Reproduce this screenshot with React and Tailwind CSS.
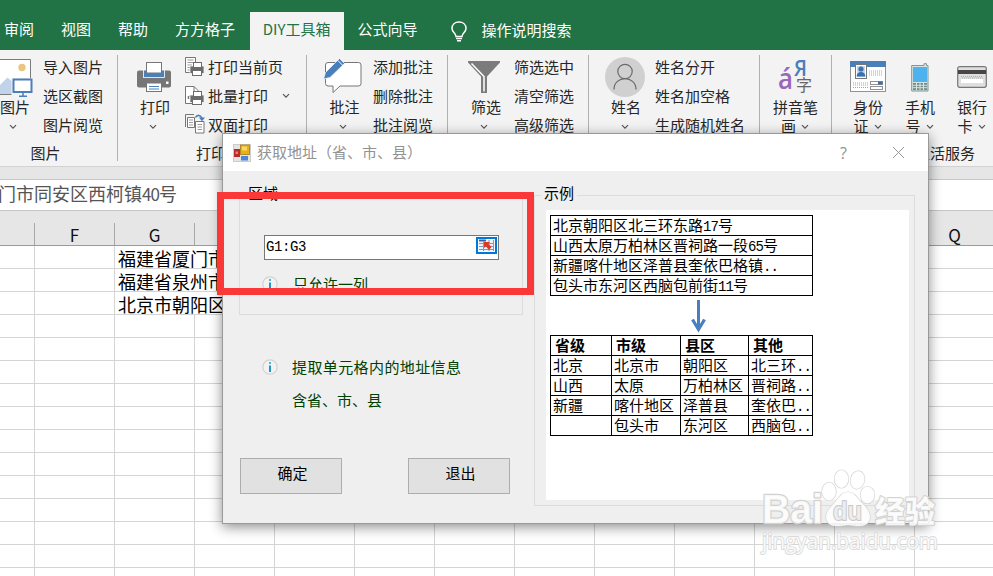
import { X } from "lucide-react";

const tabs = ["审阅", "视图", "帮助", "方方格子"];

const Chevron = ({ className = "" }) => (
  <svg className={className} width="8" height="6" viewBox="0 0 8 6" fill="none">
    <path d="M1 1.2 L4 4.2 L7 1.2" stroke="#555" strokeWidth="1.2" />
  </svg>
);

const PictureIcon = () => (
  <svg className="shrink-0" width="42" height="38" viewBox="0 0 42 38" fill="none">
    <path d="M0 .5H39.5V35.5H0" fill="#fff" stroke="#7b7b7b" />
    <circle cx="31" cy="8.500" r="3.700" fill="#ecc681" />
    <path d="M8 35 V27 L16.500 18.500 L24 25 V35Z" fill="#c0d3ea" />
    <path d="M20.500 19H42V38H20.500Z" fill="#f3f3f3" />
    <path d="M20.500 19H39V18H20.500Z" fill="#fff" />
    <rect x="22.500" y="20.500" width="18" height="12.500" fill="#fff" stroke="#4a7fb9" strokeWidth="2" />
    <path d="M28 37.300H36M32 34V37" stroke="#4a7fb9" strokeWidth="1.500" />
  </svg>
);

const PrinterIcon = () => (
  <svg width="34" height="30" viewBox="0 0 34 30">
    <rect x="0" y="8.500" width="34" height="17" rx="2" fill="#767676" />
    <rect x="6.500" y="8" width="21" height="7.500" fill="#4a7fb9" stroke="#fff" strokeWidth=".8" />
    <rect x="9.500" y=".5" width="15" height="10.500" fill="#fff" stroke="#767676" />
    <rect x="29" y="19.500" width="2.500" height="2.500" fill="#fff" />
    <rect x="9.500" y="21" width="15" height="8.500" fill="#fff" stroke="#767676" />
    <path d="M12 24.500H22M12 27H22" stroke="#4a7fb9" />
  </svg>
);

const SmallPrinter = () => (
  <g>
    <rect x="5" y="9" width="14" height="7.500" fill="#6b6b6b" stroke="#f3f3f3" strokeWidth=".8" />
    <rect x="8.500" y="5.500" width="8" height="5" fill="#fff" stroke="#6b6b6b" />
    <rect x="7.500" y="13.500" width="9" height="5" fill="#fff" stroke="#6b6b6b" />
  </g>
);

const PrintPageIcon = () => (
  <svg width="20" height="20" viewBox="0 0 20 20">
    <path d="M.5 .5H10.500V15.500H.5Z" fill="#fff" stroke="#767676" />
    <path d="M2.500 3H8.500M2.500 5.500H8.500M2.500 8H7M2.500 10.500H5M2.500 13H5" stroke="#999" />
    <SmallPrinter />
  </svg>
);

const PrintBatchIcon = () => (
  <svg width="20" height="20" viewBox="0 0 20 20">
    <path d="M.5 .5H9L14 5.500V17.500H.5Z" fill="#fff" stroke="#767676" />
    <path d="M9 .5V5.500H14" fill="none" stroke="#767676" />
    <path d="M3.500 10V13M5.500 9V11" stroke="#767676" strokeWidth="1.500" />
    <SmallPrinter />
  </svg>
);

const PrintDuplexIcon = () => (
  <svg className="-mt-0.5" width="20" height="20" viewBox="0 0 20 20" fill="none">
    <path d="M.5 13V.5H9" stroke="#767676" />
    <path d="M2.500 3.500H9.500V13.500H2.500Z" fill="#fff" stroke="#767676" />
    <path d="M4 6H8M4 8.500H8M4 11H8" stroke="#999" />
    <path d="M10.500 7.500H19V19H10.500Z" fill="#fff" stroke="#767676" />
    <path d="M12.500 10.500H17M12.500 13H17M12.500 15.500H17" stroke="#999" />
    <path d="M10.500 3.500C12 .5 16 .5 17 5" stroke="#4a7fb9" strokeWidth="1.600" />
    <path d="M13.800 3.500H20L17 7.300Z" fill="#4a7fb9" />
  </svg>
);

const CommentIcon = () => (
  <svg width="39" height="38" viewBox="0 0 39 38">
    <path
      d="M5 5.500H35.500Q38 5.500 38 8V26.500Q38 29 35.500 29H17L10 35.500V29H5Q2.500 29 2.500 26.500V8Q2.500 5.500 5 5.500Z"
      fill="#fff"
      stroke="#767676"
    />
    <path d="M.5 22 L2.500 15.500 L16.500 1.500 L21.500 6.500 L7 20.500Z" fill="#4a7fb9" stroke="#f3f3f3" strokeWidth=".8" />
    <path d="M14.700 3.300 L19.700 8.300" stroke="#fff" />
  </svg>
);

const FilterIcon = () => (
  <svg width="32" height="33" viewBox="0 0 32 33">
    <path d="M0 0H32V1.500L19 15.500V32H13V15.500L0 1.500Z" fill="#7b7b7b" />
    <path d="M3.500 2.500 L16 15.500 V30.500" fill="none" stroke="#fff" strokeWidth="1.500" />
  </svg>
);

const PersonIcon = () => (
  <svg width="40" height="40" viewBox="0 0 40 40" fill="none">
    <circle cx="20" cy="20" r="20" fill="#d0d0d0" />
    <circle cx="20" cy="14.500" r="7.200" stroke="#6a6a6a" strokeWidth="1.200" />
    <path d="M9 32.500C9 18 31 18 31 32.500" stroke="#6a6a6a" strokeWidth="1.200" />
  </svg>
);

const PinyinIcon = () => (
  <svg className="overflow-visible" width="36" height="38" viewBox="0 0 36 38">
    <text x="0" y="32" fontSize="28" fontWeight="600" textLength="15" lengthAdjust="spacingAndGlyphs" fill="#9966b8" fontFamily="Open Sans, sans-serif">á</text>
    <text x="16" y="19" fontSize="22" fontWeight="600" textLength="13" lengthAdjust="spacingAndGlyphs" fill="#4a7fb9" fontFamily="Open Sans, sans-serif">Я</text>
    <text x="18" y="34" fontSize="16" fill="#666" fontFamily="Noto Sans CJK SC, sans-serif">字</text>
  </svg>
);

const IdCardIcon = () => (
  <svg width="36" height="31" viewBox="0 0 36 31">
    <rect x=".5" y=".5" width="35" height="30" fill="#fff" stroke="#929292" />
    <rect width="36" height="6" fill="#4a7fb9" />
    <rect x="5.500" y="3.500" width="11" height="14" fill="#fff" stroke="#767676" />
    <rect x="7" y="5" width="8" height="11" fill="#c5d8ee" />
    <circle cx="11" cy="8" r="2.600" fill="#3a70ae" />
    <path d="M6.500 15.500Q7 11 11 11Q15 11 15.500 15.500Z" fill="#3a70ae" />
    <path d="M19 10H33M19 12H33M19 14H33M3 22H18M3 24H18M3 26.500H18" stroke="#a5a5a5" strokeDasharray="1 1" />
    <rect x="20.500" y="20.500" width="12" height="3" fill="#fff" stroke="#929292" />
    <rect x="28" y="20.500" width="4.500" height="3" fill="#3a70ae" />
    <rect x="20.500" y="25.500" width="12" height="3" fill="#fff" stroke="#929292" />
  </svg>
);

const PhoneIcon = () => (
  <svg width="18" height="29" viewBox="0 0 18 29">
    <path d="M.7 2.500H13V.7H15.500V2.500H17V28H.7Z" fill="#d9e4e2" stroke="#7f9693" />
    <rect x="2" y="4" width="14" height="15" fill="#4db2ee" />
    <rect x="2" y="20" width="14" height="7" fill="#718c89" />
    <path d="M5.500 20V27M9 20V27M12.500 20V27M2 22.300H16M2 24.700H16" stroke="#d9e4e2" />
  </svg>
);

const BankCardIcon = () => (
  <svg width="30" height="22" viewBox="0 0 30 22">
    <rect x=".7" y=".7" width="28.600" height="20.600" rx="2" fill="#e0dfdf" stroke="#777" strokeWidth="1.200" />
    <rect x="1" y="4" width="28" height="4" fill="#494448" />
    <path d="M4 10.500H26M5 12H26" stroke="#a9a9a9" strokeDasharray="1 1" />
    <rect x="4" y="13" width="22" height="4" fill="#fff" />
  </svg>
);

const InfoIcon = () => (
  <svg className="shrink-0" width="16" height="16" viewBox="0 0 16 16">
    <circle cx="8" cy="8" r="7.200" fill="#f2f2f2" stroke="#d2d2d2" strokeWidth="1.200" />
    <path d="M8 3V5" stroke="#4ab8dc" strokeWidth="2" />
    <path d="M8 6.500V13" stroke="#1e98cc" strokeWidth="2" />
  </svg>
);

const AppIcon = () => (
  <svg width="18" height="18" viewBox="0 0 18 18">
    <rect x=".5" y=".5" width="17" height="17" fill="#e4e4e4" stroke="#ccc" />
    <rect x="1" y="5" width="6" height="8" fill="#b92c28" />
    <rect x="2.500" y="7.500" width="2.500" height="2.500" fill="#e8807c" />
    <rect x="7.500" y="1" width="9" height="9.500" fill="#e9ae1c" stroke="#a97a10" strokeWidth=".8" />
    <rect x="9" y="2.500" width="5" height="4" fill="#fbd75c" />
    <rect x="8" y="12" width="7" height="4.500" fill="#4b86dc" />
  </svg>
);

const RangePicker = () => (
  <button className="flex h-[17px] w-[21px] items-center justify-center border-2 border-[#0078d7] bg-white">
    <svg width="17" height="13" viewBox="0 0 17 13">
      <rect x=".5" y=".5" width="16" height="12" fill="#eef3fb" />
      <path d="M1 1.500H8" stroke="#3f5f9f" strokeWidth="2" />
      <path d="M1 4.500H16M1 7.500H16M1 10.500H16M5.500 2V12M11 1V12M15.500 1V12" stroke="#7f97c6" strokeWidth="1" />
      <path d="M6 3H12L10.300 4.800L13.500 8L11 11L7.800 7.300L6 9Z" fill="#d93a22" />
    </svg>
  </button>
);

const BigButton = ({ icon, label, iconClass, className, chevronClass = "" }) => (
  <div className={`flex shrink-0 flex-col items-center ${className}`}>
    <div className={`flex h-[42px] justify-center ${iconClass}`}>{icon}</div>
    <span className="leading-5 whitespace-nowrap">{label}</span>
    <Chevron className={`mt-[7px] ${chevronClass}`} />
  </div>
);

// Label wraps to a second line that carries the drop-down arrow
const TwoLineButton = ({ icon, lines, className, iconClass }) => (
  <div className={`flex shrink-0 flex-col items-center ${className}`}>
    <div className={`flex h-[42px] justify-center ${iconClass}`}>{icon}</div>
    <span className="leading-5 whitespace-nowrap">{lines[0]}</span>
    <span className="flex items-center gap-[5px] pr-px leading-[18px]">
      {lines[1]}
      <Chevron className="mt-0.5" />
    </span>
  </div>
);

const Items = ({ items, className = "" }) => (
  <div className={`-mt-px flex shrink-0 flex-col gap-[3px] ${className}`}>
    {items.map((item) => (
      <span key={item} className="leading-[26px] whitespace-nowrap">
        {item}
      </span>
    ))}
  </div>
);

const Group = ({ className, label, children }) => (
  <section className={`flex h-[106px] shrink-0 flex-col border-[#b1b1b1] ${className}`}>
    <div className="flex h-[90px] shrink-0">{children}</div>
    {label && <div className="text-center leading-4">{label}</div>}
  </section>
);

const Ribbon = () => (
  <div className="flex h-[117px] overflow-hidden border-b border-[#d2d2d2] bg-[#f3f3f3] pt-[5px] text-[15px] text-[#262626]">
    <Group className="w-[118px] border-r pr-[26px]" label="图片">
      <BigButton className="w-[30px]" iconClass="pt-1 mr-[6px]" icon={<PictureIcon />} label="图片" chevronClass="mr-1" />
      <Items className="ml-[13px]" items={["导入图片", "选区截图", "图片阅览"]} />
    </Group>
    <Group className="w-[189px] border-r pr-0.5" label="打印">
      <BigButton className="ml-[19px] w-[36px]" iconClass="pt-[7px] mr-0.5" icon={<PrinterIcon />} label="打印" chevronClass="mr-1" />
      <div className="-mt-px ml-[12px] flex shrink-0 flex-col gap-[3px] leading-[26px]">
        <div className="flex items-center gap-[3px]">
          <PrintPageIcon />
          打印当前页
        </div>
        <div className="flex items-center gap-[3px]">
          <PrintBatchIcon />
          批量打印
          <Chevron className="ml-[11px]" />
        </div>
        <div className="flex items-center gap-[3px]">
          <PrintDuplexIcon />
          双面打印
        </div>
      </div>
    </Group>
    <Group className="w-[141px] border-r">
      <BigButton className="ml-[16px] w-[43px]" iconClass="pt-0.5 mr-1" icon={<CommentIcon />} label="批注" chevronClass="mr-1" />
      <Items className="ml-[7px]" items={["添加批注", "删除批注", "批注阅览"]} />
    </Group>
    <Group className="w-[141px] border-r">
      <BigButton className="ml-[20px] w-[36px]" iconClass="pt-[6px] mr-1" icon={<FilterIcon />} label="筛选" chevronClass="mr-1" />
      <Items className="ml-[10px]" items={["筛选选中", "清空筛选", "高级筛选"]} />
    </Group>
    <Group className="w-[171px] border-r">
      <BigButton className="ml-[16px] w-[42px]" iconClass="pt-0.5 mr-0.5" icon={<PersonIcon />} label="姓名" chevronClass="mr-0.5" />
      <Items className="ml-[8px]" items={["姓名分开", "姓名加空格", "生成随机姓名"]} />
    </Group>
    <Group className="w-[72px] border-r">
      <TwoLineButton className="w-[71px]" iconClass="pt-0.5" icon={<PinyinIcon />} lines={["拼音笔", "画"]} />
    </Group>
    <Group className="w-[226px]" label="生活服务">
      <TwoLineButton className="ml-[16px] w-[40px]" iconClass="pt-[6px]" icon={<IdCardIcon />} lines={["身份", "证"]} />
      <TwoLineButton className="ml-[12px] w-[40px]" iconClass="pt-[8px]" icon={<PhoneIcon />} lines={["手机", "号"]} />
      <TwoLineButton className="ml-[12px] w-[40px]" iconClass="pt-[11px]" icon={<BankCardIcon />} lines={["银行", "卡"]} />
    </Group>
  </div>
);

const columns = ["", "F", "G", "", "", "", "", "", "", "", "", "", "Q"];
const cells = ["福建省厦门市", "福建省泉州市", "北京市朝阳区"];

const Sheet = () => (
  <div>
    <div className="flex h-[35px] items-end border-b border-[#9b9b9b] bg-[#e6e6e6]">
      {columns.map((c, i) => (
        <div
          key={i}
          className={`h-[22px] shrink-0 border-r border-[#a9a9a9] text-center text-[17px] leading-[24px] text-[#111] ${
            i === 0 ? "w-[35px]" : "w-[80px]"
          }`}
        >
          {c}
        </div>
      ))}
    </div>
    {Array.from({ length: 15 }, (_, r) => (
      <div key={r} className="flex h-[23px] border-b border-[#d4d4d4]">
        {columns.map((_, i) => (
          <div
            key={i}
            className={`shrink-0 pl-[3px] text-[18px] leading-[24px] whitespace-nowrap text-black ${
              i === 0 ? "w-[35px]" : "w-[80px]"
            } ${i === 2 && cells[r] ? "" : "border-r border-[#d4d4d4]"}`}
          >
            {i === 2 && cells[r]}
          </div>
        ))}
      </div>
    ))}
  </div>
);

// Half-width digits, two to one Chinese character
const Num = ({ children }) => (
  <span className="font-['Liberation_Mono',monospace] text-[14px] tracking-[-0.9px]">{children}</span>
);

const addresses = [
  ["北京朝阳区北三环东路", "17", "号"],
  ["山西太原万柏林区晋祠路一段", "65", "号"],
  ["新疆喀什地区泽普县奎依巴格镇", "..", ""],
  ["包头市东河区西脑包前街", "11", "号"],
];

const results = [
  ["北京", "北京市", "朝阳区", "北三环"],
  ["山西", "太原", "万柏林区", "晋祠路"],
  ["新疆", "喀什地区", "泽普县", "奎依巴"],
  ["", "包头市", "东河区", "西脑包"],
];

const Example = () => (
  <div className="h-[290px] w-[363px] bg-white pt-[5px] pl-[4px] text-black">
    <div className="w-[263px] border border-b-0 border-black">
      {addresses.map(([before, num, after]) => (
        <div key={before} className="h-[20px] border-b border-black pl-[2px] leading-[18px] whitespace-nowrap">
          {before}
          <Num>{num}</Num>
          {after}
        </div>
      ))}
    </div>
    <svg className="mt-[3px] ml-[141px]" width="15" height="34" viewBox="0 0 15 34" fill="none">
      <path d="M7.500 1V30" stroke="#4a7fbd" strokeWidth="3" />
      <path d="M1.500 20.500L7.500 30.500L13.500 20.500" stroke="#4a7fbd" strokeWidth="3.200" />
    </svg>
    <div className="mt-[2px] grid w-[263px] grid-cols-[61px_69px_68px_64px] border-t border-l border-black">
      {["省级", "市级", "县区", "其他"].map((h) => (
        <div key={h} className="h-[20px] border-r border-b border-black pl-1 font-bold leading-[18px]">
          {h}
        </div>
      ))}
      {results.flatMap((row, r) =>
        row.map((text, c) => (
          <div key={`${r}-${c}`} className="h-[20px] border-r border-b border-black pl-[2px] leading-[18px] whitespace-nowrap">
            {text}
            {c === 3 && <Num>..</Num>}
          </div>
        ))
      )}
    </div>
  </div>
);

const Dialog = () => (
  <div className="absolute top-[133px] left-[222px] h-[391px] w-[707px] border border-[#999] bg-[#efefef] text-[15px] shadow-[0_3px_12px_rgba(0,0,0,0.45)]">
    <div className="flex h-[37px] items-center bg-white pl-[10px] text-[#929292]">
      <AppIcon />
      <span className="ml-[6px] pb-px">获取地址（省、市、县）</span>
      <span className="ml-auto font-['Open_Sans',sans-serif] text-[16px]">?</span>
      <X className="mr-[19px] ml-[41px]" size={21} strokeWidth={1} color="#888" />
    </div>

    <div className="flex">
      <div className="w-[311px] pl-[16px]">
        <fieldset className="mt-[13px] h-[131px] w-[284px] border border-[#dcdcdc] pl-[24px]">
          <legend className="-ml-[19px] px-[3px] pb-[5px] leading-[17px] text-black">区域</legend>
          <div className="mt-[29px] flex h-[25px] w-[235px] items-start justify-between border border-[#777] bg-white pt-px pr-[1px] pl-[1px]">
            <span className="font-['Liberation_Mono',monospace] text-[14px] leading-[20px] tracking-[-0.4px] text-black">G1:G3</span>
            <RangePicker />
          </div>
          <div className="mt-[13px] -ml-[2px] flex items-center gap-[15px] text-[#004000]">
            <InfoIcon />
            只允许一列
          </div>
        </fieldset>

        <div className="mt-[41px] ml-[23px] flex items-center gap-[14px] tracking-[0.4px] text-[#004000]">
          <InfoIcon />
          提取单元格内的地址信息
        </div>
        <div className="mt-[10px] ml-[53px] text-[#004000]">含省、市、县</div>

        <div className="mt-[47px] ml-px flex gap-[66px] text-black">
          <button className="h-[36px] w-[102px] border border-[#adadad] bg-[#e1e1e1] pb-[5px] pl-[3px]">确定</button>
          <button className="h-[36px] w-[102px] border border-[#adadad] bg-[#e1e1e1] pb-[5px] pl-[3px]">退出</button>
        </div>
      </div>

      <fieldset className="mt-[13px] h-[322px] w-[381px] border border-[#dcdcdc] pl-[11px]">
        <legend className="-ml-[5px] px-[3px] pb-[5px] leading-[17px] text-black">示例</legend>
        <div className="pt-[4px]">
          <Example />
        </div>
      </fieldset>
    </div>
  </div>
);

const Watermark = () => (
  <svg className="absolute top-[464px] left-[758px]" width="190" height="96" viewBox="0 0 190 96">
    <g fill="#fff" fillOpacity=".85" stroke="#d2d2d2" strokeWidth="1.200" paintOrder="stroke" strokeLinejoin="round">
      <text x="4" y="59" fontSize="41" fontWeight="700" textLength="61" lengthAdjust="spacingAndGlyphs" strokeWidth="2.500" fontFamily="Liberation Sans, sans-serif">
        Bai
      </text>
      <ellipse cx="71" cy="27.500" rx="7" ry="9" />
      <ellipse cx="83.500" cy="15" rx="7" ry="9" />
      <ellipse cx="99.500" cy="16" rx="7" ry="9" transform="rotate(12 99.500 16)" />
      <ellipse cx="109.500" cy="31" rx="7" ry="8.500" />
      <path d="M90 28C96 28 99 33 103 38C108 43 112 47 112 53C112 59 107 62 101 62C95 62 94 61 90 61C86 61 84 62 79 62C73 62 68 59 68 53C68 47 73 43 77 38C81 33 84 28 90 28Z" />
      <text x="75" y="56" fontSize="25" fontWeight="700" textLength="29" lengthAdjust="spacingAndGlyphs" fill="#eee" stroke="#c8c8c8" strokeWidth="1.800" fontFamily="Liberation Sans, sans-serif">
        du
      </text>
      <text x="117" y="58" fontSize="30" fontWeight="900" textLength="60" strokeWidth="2" fontFamily="Noto Sans CJK SC, sans-serif">
        经验
      </text>
      <text x="4" y="85" fontSize="22" textLength="176" lengthAdjust="spacingAndGlyphs" stroke="#dadada" strokeWidth="1.800" fontFamily="Open Sans, sans-serif">
        jingyan.baidu.com
      </text>
    </g>
  </svg>
);

const App = () => (
  <div lang="zh-CN" className="relative h-[576px] w-[993px] overflow-hidden bg-white font-['Noto_Sans_CJK_SC',sans-serif]">
    <header className="flex h-[50px] items-end bg-[#217346] pt-3 text-[15px] text-white">
      <nav className="flex h-[38px] items-center">
        <div className="flex gap-[27px] pr-[14.500px] pb-[3px] pl-1">
          {tabs.map((t) => (
            <span key={t}>{t}</span>
          ))}
        </div>
        <span className="flex h-full w-[94px] items-center justify-center bg-[#f3f3f3] pb-[3px] text-[#217346]">DIY工具箱</span>
        <span className="ml-[14px] pb-[3px]">公式向导</span>
        <svg className="ml-[33px]" width="16" height="21" viewBox="0 0 16 21" fill="none" stroke="#fff" strokeWidth="1.500">
          <path d="M5 15.500C5 12 1 11.500 1 7.500C1 3.500 4 1 8 1S15 3.500 15 7.500C15 11.500 11 12 11 15.500Z" />
          <path d="M5 17.500H11M6 19.800H10" />
        </svg>
        <span className="ml-[15px] pb-0.5">操作说明搜索</span>
      </nav>
    </header>
    <Ribbon />
    <div className="h-[12px] bg-[#e6e6e6]" />
    <div className="flex h-[32px] items-center border-y border-[#c6c6c6] bg-white pb-[3px] text-[18px] text-[#555]">
      <span className="-ml-[2px] whitespace-nowrap">
        门市同安区西柯镇<span className="text-[17px] tracking-[-1px]">40</span>号
      </span>
    </div>
    <Sheet />
    <Dialog />
    {/* highlight around the range selector */}
    <div className="absolute top-[192px] left-[217px] h-[103px] w-[317px] border-[7px] border-[#fb3838]" />
    <Watermark />
  </div>
);

export default App;
